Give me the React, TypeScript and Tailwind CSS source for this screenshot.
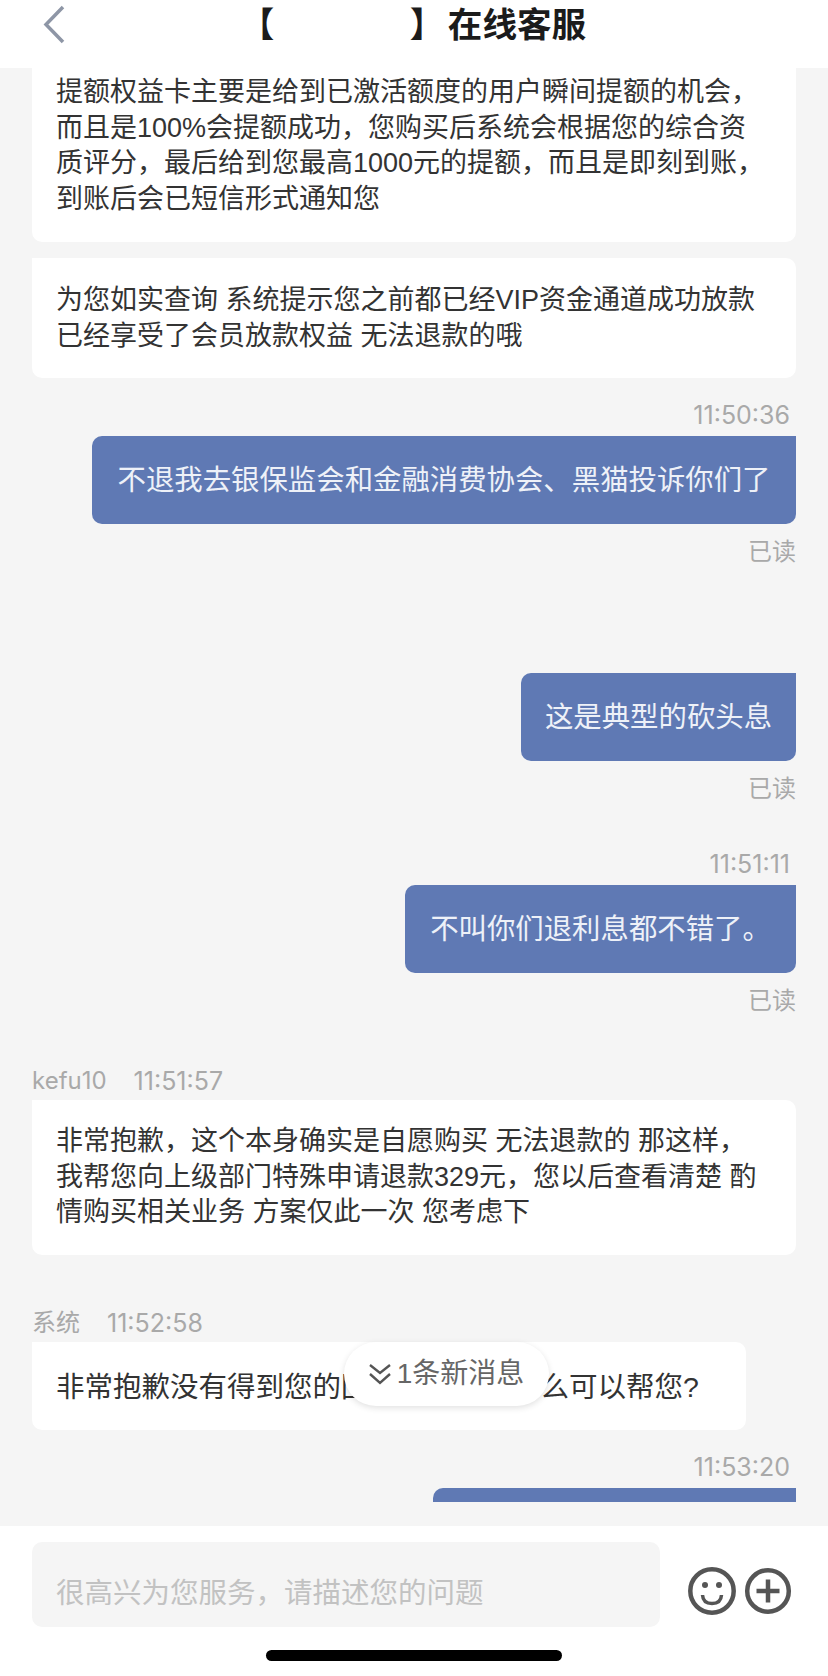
import React from "react";

const font = { fontFamily: '"Liberation Sans", "Noto Sans CJK SC", sans-serif' };

function Incoming({ meta, time, lines, className = "" }: { meta?: string; time?: string; lines: string[]; className?: string }) {
  return (
    <div>
      {meta && (
        <div className="flex gap-[27px] text-[24px] leading-[30px] text-[#a9a9a9] mb-[4px] [font-family:Inter,'Noto_Sans_CJK_SC',sans-serif]">
          <span>{meta}</span>
          <span className="text-[25px]">{time}</span>
        </div>
      )}
      <div className={`bg-white rounded-[10px] rounded-tl-none px-[24px] leading-[35.6px] text-[#333] ${className}`}>
        {lines.map((l) => (
          <div key={l} className="whitespace-nowrap">{l}</div>
        ))}
      </div>
    </div>
  );
}

function Outgoing({ time, text, read = true, width, className = "" }: { time?: string; text: string; read?: boolean; width: string; className?: string }) {
  return (
    <div className={`flex flex-col items-end ${className}`}>
      {time && <div className="text-[25px] leading-[30px] text-[#a9a9a9] pr-[6px] mb-[6px] [font-family:Inter,sans-serif]">{time}</div>}
      <div className={`${width} h-[88px] bg-[#5f79b4] rounded-[10px] rounded-tr-none flex items-center justify-center text-[28.4px] text-[#eef1f8] whitespace-nowrap`}>
        {text}
      </div>
      {read && <div className="text-[24px] leading-[30px] text-[#a9a9a9] mt-[13px]">已读</div>}
    </div>
  );
}

export default function App() {
  return (
    <div className="relative w-[828px] h-[1676px] flex flex-col bg-white overflow-hidden" style={font}>
      <header className="relative h-[68px] shrink-0 bg-white flex items-center">
        <svg className="absolute left-[42px] top-[4px]" width="24" height="40" viewBox="0 0 24 40" fill="none">
          <path d="M21 3 L4 20.5 L21 38" stroke="#8e96a6" strokeWidth="3.5" />
        </svg>
        <div className="w-full flex justify-center -mt-[18px] text-[34.6px] leading-[40px] font-bold text-[#1b1b1b]">
          <span className="w-[24px] -ml-[2px]">【</span>
          <span className="w-[146px]" />
          <span className="w-[34px]">】</span>
          <span className="ml-[4px]">在线客服</span>
        </div>
      </header>

      <main className="relative h-[1458px] shrink-0 bg-[#f5f5f5] px-[32px]">
        <div className="h-[1434px] overflow-hidden">
          <div className="bg-white rounded-b-[10px] h-[174px] pt-[7px] px-[24px] text-[27px] leading-[35.6px] text-[#333]">
            <div className="whitespace-nowrap">提额权益卡主要是给到已激活额度的用户瞬间提额的机会，</div>
            <div className="whitespace-nowrap">而且是100%会提额成功，您购买后系统会根据您的综合资</div>
            <div className="whitespace-nowrap">质评分，最后给到您最高1000元的提额，而且是即刻到账，</div>
            <div className="whitespace-nowrap">到账后会已短信形式通知您</div>
          </div>
          <div className="mt-[16px]">
            <Incoming className="h-[120px] pt-[25px] text-[27px]" lines={["为您如实查询 系统提示您之前都已经VIP资金通道成功放款", "已经享受了会员放款权益 无法退款的哦"]} />
          </div>
          <Outgoing className="mt-[22px]" time="11:50:36" text="不退我去银保监会和金融消费协会、黑猫投诉你们了" width="w-[704px]" />
          <Outgoing className="mt-[106px]" text="这是典型的砍头息" width="w-[275px]" />
          <Outgoing className="mt-[45px]" time="11:51:11" text="不叫你们退利息都不错了。" width="w-[391px]" />
          <div className="mt-[50px]">
            <Incoming className="h-[155px] pt-[24px] text-[27px]" meta="kefu10" time="11:51:57" lines={["非常抱歉，这个本身确实是自愿购买 无法退款的 那这样，", "我帮您向上级部门特殊申请退款329元，您以后查看清楚 酌", "情购买相关业务 方案仅此一次 您考虑下"]} />
          </div>
          <div className="mt-[53px] w-[714px]">
            <Incoming className="h-[88px] flex items-center pt-[4px] text-[28.5px]" meta="系统" time="11:52:58" lines={["非常抱歉没有得到您的回复，请问有什么可以帮您?"]} />
          </div>
          <Outgoing className="mt-[22px]" time="11:53:20" text="" read={false} width="w-[363px]" />
        </div>

        <div className="absolute left-[344px] top-[1274px] w-[205px] h-[64px] rounded-full bg-white shadow-[0_2px_6px_rgba(0,0,0,0.12)] flex items-center justify-center text-[28px] text-[#666]">
          <svg width="22" height="22" viewBox="0 0 22 22" fill="none" stroke="#555" strokeWidth="2.4" className="mr-[6px]">
            <path d="M1 2 L11 10 L21 2" />
            <path d="M1 11 L11 20 L21 11" />
          </svg>
          <span>1条新消息</span>
        </div>
      </main>

      <footer className="relative flex-1 bg-white px-[32px] pt-[16px]">
        <div className="flex items-start">
          <div className="w-[628px] h-[85px] bg-[#f5f5f5] rounded-[10px] flex items-center pl-[24px] pt-[18px] text-[28.5px] text-[#c2c2c2]">
            很高兴为您服务，请描述您的问题
          </div>
          <svg className="ml-[28px] mt-[24px]" width="48" height="50" viewBox="0 0 48 50" fill="none" stroke="#555" strokeWidth="4.5">
            <circle cx="24" cy="25" r="21.7" />
            <circle cx="17" cy="19" r="3" fill="#555" stroke="none" />
            <circle cx="31" cy="19" r="3" fill="#555" stroke="none" />
            <path d="M14.5 29 Q15 37.5 24 37.5 Q33 37.5 33.5 29" strokeWidth="3.5" />
          </svg>
          <svg className="ml-[8px] mt-[25px]" width="48" height="48" viewBox="0 0 48 48" fill="none" stroke="#555" strokeWidth="4.5">
            <circle cx="24" cy="24" r="20.8" />
            <path d="M12.5 24 H35.5 M24 12.5 V35.5" />
          </svg>
        </div>
        <div className="absolute left-[266px] top-[124px] w-[296px] h-[11px] rounded-full bg-black" />
      </footer>
    </div>
  );
}
